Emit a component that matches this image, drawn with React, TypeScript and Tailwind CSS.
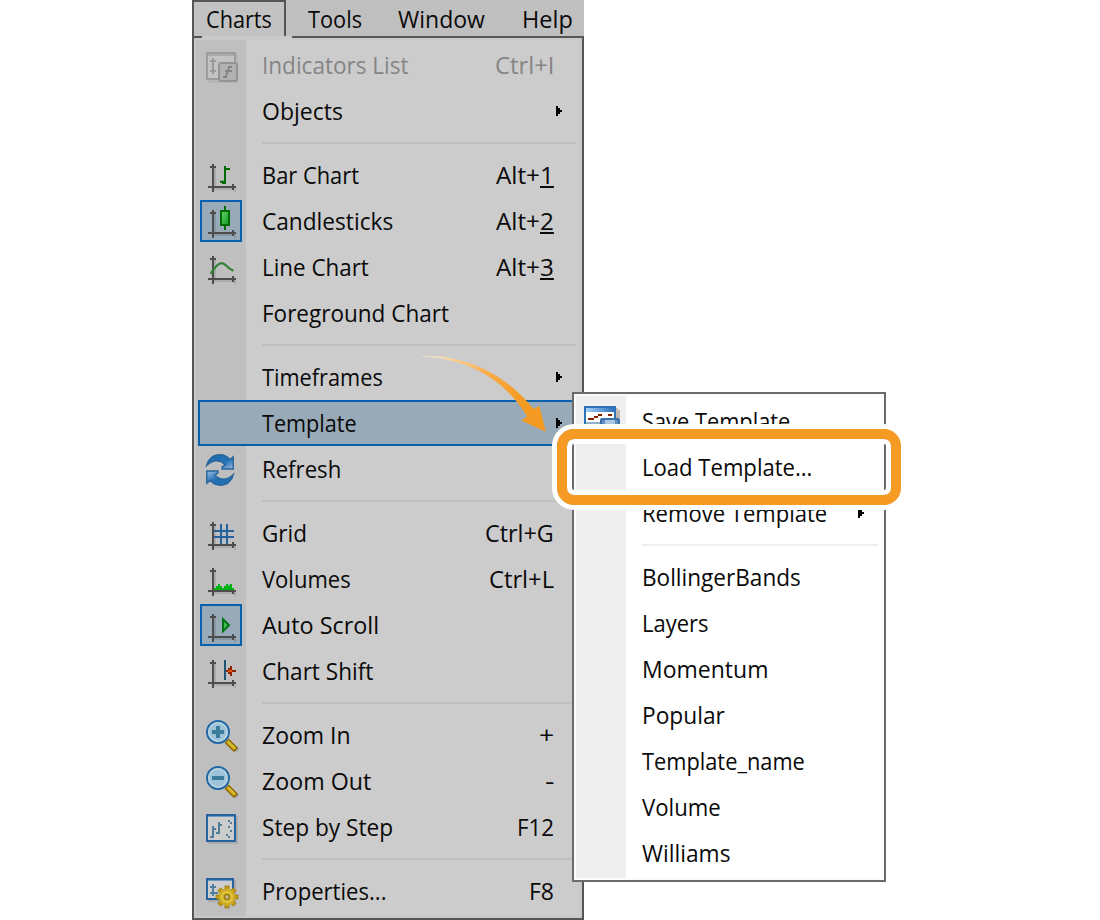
import { useLayoutEffect, useRef, useState, type ReactNode } from "react";

type FitProps = { width: number; right?: boolean; children: ReactNode };

/* Condenses a label horizontally so that it takes exactly the given width. */
function Fit({ width, right, children }: FitProps) {
  const ref = useRef<HTMLSpanElement>(null);
  const [scale, setScale] = useState(1);
  useLayoutEffect(() => {
    if (ref.current) setScale(width / ref.current.offsetWidth);
  }, [width]);
  return (
    <span
      className={right ? "flex justify-end" : "flex justify-start"}
      style={{ width }}
    >
      <span
        ref={ref}
        className={
          right
            ? "shrink-0 origin-right whitespace-pre"
            : "shrink-0 origin-left whitespace-pre"
        }
        style={{ transform: `scaleX(${scale})` }}
      >
        {children}
      </span>
    </span>
  );
}

function Icon({ children }: { children: ReactNode }) {
  return (
    <svg viewBox="0 0 16 16" className="block h-8 w-8 shrink-0 overflow-visible">
      {children}
    </svg>
  );
}

function Axes() {
  return (
    <>
      <g fill="#000" opacity="0.1">
        <path d="M4 4h1v9H4zM3 14h12v1H3zM14 15h1v1h-1z" />
      </g>
      <path
        fill="#4d4d4d"
        d="M3 2h1v14H3zM1 13h14v1H1zM2 3h3v1H2zM13 12h1v3h-1z"
      />
    </>
  );
}

const indicatorsIcon = (
  <Icon>
    <rect x="1" y="2" width="15" height="14.5" fill="#b6b6b6" />
    <rect x="0.5" y="1.5" width="14" height="13" fill="#c3c3c3" stroke="#9d9d9d" />
    <path d="M1 2h13v1H1z" fill="#aaa" />
    <path d="M3.5 4v8M2 5.5h3M2 10.5h3" stroke="#999" fill="none" />
    <rect x="6.5" y="6.5" width="9" height="9" rx="1" fill="#b2b2b2" stroke="#949494" />
    <path d="M13 8.5h-1.5l-1.5 5H8.5M9.5 10.5h3.5" stroke="#858585" fill="none" />
  </Icon>
);

const barIcon = (
  <Icon>
    <Axes />
    <path fill="#006b00" d="M9 3h1v9H9zM10 4h2v1h-2zM7 10.4h2v1H7zM8 11h1v1H8z" />
  </Icon>
);

const candleIcon = (
  <Icon>
    <defs>
      <linearGradient id="candle" x1="0" x2="1" y1="0" y2="1">
        <stop offset="0" stopColor="#6bd16b" />
        <stop offset="1" stopColor="#0b9b1d" />
      </linearGradient>
    </defs>
    <Axes />
    <path fill="#006b00" d="M9 0h1v12H9z" />
    <rect x="7.5" y="2.5" width="4" height="7" fill="url(#candle)" stroke="#006b00" />
  </Icon>
);

const lineIcon = (
  <Icon>
    <Axes />
    <path
      d="M2.3 10.9C4 8.2 5.6 5.9 7.7 5.6C9.8 5.4 11 8.6 13.7 9.3"
      fill="none"
      stroke="#348234"
      strokeWidth="1.1"
    />
  </Icon>
);

const refreshIcon = (
  <Icon>
    <defs>
      <linearGradient id="arcTop" x1="0" x2="1" y1="0" y2="1">
        <stop offset="0" stopColor="#1c6aa9" />
        <stop offset="0.6" stopColor="#2572b8" />
        <stop offset="1" stopColor="#a0bedd" />
      </linearGradient>
      <linearGradient id="arcBottom" x1="1" x2="0" y1="1" y2="0">
        <stop offset="0" stopColor="#1c6aa9" />
        <stop offset="0.55" stopColor="#2572b8" />
        <stop offset="1" stopColor="#a0bedd" />
      </linearGradient>
    </defs>
    <path
      d="M0.3 5.8C1 2.6 3.6.4 6.8.4C9 .4 10.7 1.3 12 2.8L13.6 1.4V7.5H8V6.6L9.6 5.2C6.5 2.6 3 3.2.3 5.8Z"
      fill="url(#arcTop)"
      stroke="#27649b"
      strokeWidth="0.7"
    />
    <path
      d="M13.7 10.2C13 13.4 10.4 15.6 7.2 15.6C5 15.6 3.3 14.7 2 13.2L.4 14.6V8.5H6V9.4L4.4 10.8C7.5 13.4 11 12.8 13.7 10.2Z"
      fill="url(#arcBottom)"
      stroke="#27649b"
      strokeWidth="0.7"
    />
  </Icon>
);

const gridIcon = (
  <Icon>
    <Axes />
    <path fill="#24639f" d="M7 3h1v10H7zM10 3h1v10h-1zM4 6h10v1H4zM4 9h10v1H4z" />
  </Icon>
);

const volumesIcon = (
  <Icon>
    <Axes />
    <path
      fill="#00b315"
      d="M4 13v-1h1v-1h1v-1h1v1h1v1h1v-1h1v-1h1v.6h1V10h1v2h1v1z"
    />
  </Icon>
);

const autoScrollIcon = (
  <Icon>
    <Axes />
    <path d="M8.5 4.6v6l3-3z" fill="#45b958" stroke="#007315" />
  </Icon>
);

const shiftIcon = (
  <Icon>
    <Axes />
    <path fill="#1d5473" d="M9 2h1v10H9z" />
    <path fill="#8e2300" d="M10 7h1V6h1V5h1v2h2v1h-2v2h-1V9h-1V8h-1z" />
    <path fill="#e25510" d="M11 7h2v1h-2z" />
  </Icon>
);

function Magnifier({ plus }: { plus?: boolean }) {
  return (
    <Icon>
      <path d="M11 12.3l4 4 1.5-1.4-1-1.6" fill="#000" opacity="0.12" />
      <path d="M10.3 10.3l4.7 4.7" stroke="#8a6400" strokeWidth="3" />
      <path d="M10.7 10.7l3.8 3.8" stroke="#cfae1e" strokeWidth="1.6" />
      <path d="M11.2 10.7l3.4 3.4" stroke="#e6d35a" strokeWidth="0.5" />
      <circle cx="6" cy="6" r="5.5" fill="#9cc3d8" stroke="#1f66a4" strokeWidth="0.95" />
      <circle cx="6" cy="6" r="4.6" fill="none" stroke="#b9d4e0" strokeWidth="0.8" />
      <path
        d={plus ? "M5 3h2v2h2v2H7v2H5V7H3V5h2z" : "M3 5h6v2H3z"}
        fill="#3a7c9c"
      />
    </Icon>
  );
}

const stepIcon = (
  <Icon>
    <rect x="1" y="2" width="15" height="14" fill="#000" opacity="0.1" />
    <rect x="0.5" y="1.5" width="14" height="13" fill="#cdcdcd" stroke="#24639f" />
    <path d="M1 2h13v.5H1z" fill="#6c98c2" />
    <path
      fill="#4d7f9a"
      d="M3 7h1v5H3zM4 8h1v1H4zM2 12h2v1H2zM6 5h1v6H6zM7 6h1v1H7zM5 10h1v1H5z M11 4h1v1h-1zM12 5h1v1h-1zM11 7h1v1h-1zM12 9h1v1h-1zM10 11h1v1h-1zM11 12h1v1h-1z"
    />
  </Icon>
);

const teeth = [0, 45, 90, 135, 180, 225, 270, 315];

const propertiesIcon = (
  <Icon>
    <rect x="1" y="2" width="14" height="11" fill="#000" opacity="0.1" />
    <rect x="0.5" y="1.5" width="13" height="10" fill="#cdcdcd" stroke="#24639f" />
    <path d="M1 2h12v.5H1z" fill="#6c98c2" />
    <path fill="#4d7f9a" d="M3 4h1v6H3zM2 5h3v1H2zM2 8h3v1H2zM5 8h1v1H5z" />
    <g fill="#c39b16" stroke="#94720a" strokeWidth="0.35">
      {teeth.map((a) => (
        <rect
          key={a}
          x="9.5"
          y="5"
          width="2"
          height="3"
          transform={`rotate(${a} 10.5 10.5)`}
        />
      ))}
    </g>
    <circle cx="10.5" cy="10.5" r="4.2" fill="#cdac22" />
    <circle cx="10.5" cy="10.5" r="2.6" fill="none" stroke="#e0c745" strokeWidth="0.9" />
    <circle cx="10.5" cy="10.5" r="1.2" fill="#c4bd9c" stroke="#997710" strokeWidth="0.7" />
  </Icon>
);

const saveIcon = (
  <Icon>
    <defs>
      <linearGradient id="titleBar" x1="0" x2="1" y1="0" y2="0">
        <stop offset="0" stopColor="#a8d0fa" />
        <stop offset="1" stopColor="#2b73b9" />
      </linearGradient>
    </defs>
    <path d="M16 2h1v1h1v4h-2z" fill="#bdb8b0" />
    <rect x="0.5" y="1.5" width="15" height="13" fill="#fff" stroke="#2b73b9" />
    <path d="M1 2h14v2H1z" fill="url(#titleBar)" />
    <path fill="#872100" d="M2 7h3v1H2zM5 6h2v1H5zM7 5h2v1H7zM12 5h2v1h-2z" />
    <path d="M1 9h7v1H1z" fill="#8fb0c8" />
    <rect x="8.5" y="7.5" width="9" height="8" rx="0.5" fill="#5f8fc2" stroke="#3a6ea8" />
    <path d="M10.5 8h5v2.5h-5z" fill="#aac8e4" />
  </Icon>
);

type Item = {
  label: string;
  w: number;
  icon?: ReactNode;
  checked?: boolean;
  keys?: string;
  access?: string;
  kw?: number;
  sub?: boolean;
  active?: boolean;
  disabled?: boolean;
};

const mainGroups: Item[][] = [
  [
    { label: "Indicators List", w: 147, icon: indicatorsIcon, keys: "Ctrl+I", kw: 59, disabled: true },
    { label: "Objects", w: 81, sub: true },
  ],
  [
    { label: "Bar Chart", w: 97, icon: barIcon, keys: "Alt+", access: "1", kw: 58 },
    { label: "Candlesticks", w: 131, icon: candleIcon, checked: true, keys: "Alt+", access: "2", kw: 58 },
    { label: "Line Chart", w: 107, icon: lineIcon, keys: "Alt+", access: "3", kw: 58 },
    { label: "Foreground Chart", w: 187 },
  ],
  [
    { label: "Timeframes", w: 121, sub: true },
    { label: "Template", w: 95, sub: true, active: true },
    { label: "Refresh", w: 79, icon: refreshIcon },
  ],
  [
    { label: "Grid", w: 45, icon: gridIcon, keys: "Ctrl+G", kw: 69 },
    { label: "Volumes", w: 89, icon: volumesIcon, keys: "Ctrl+L", kw: 65 },
    { label: "Auto Scroll", w: 117, icon: autoScrollIcon, checked: true },
    { label: "Chart Shift", w: 111, icon: shiftIcon },
  ],
  [
    { label: "Zoom In", w: 89, icon: <Magnifier plus />, keys: "+", kw: 15 },
    { label: "Zoom Out", w: 109, icon: <Magnifier />, keys: "-", kw: 9 },
    { label: "Step by Step", w: 131, icon: stepIcon, keys: "F12", kw: 37 },
  ],
  [{ label: "Properties...", w: 124, icon: propertiesIcon, keys: "F8", kw: 25 }],
];

const templateGroups: Item[][] = [
  [
    { label: "Save Template...", w: 166, icon: saveIcon },
    { label: "Load Template...", w: 170 },
    { label: "Remove Template", w: 185, sub: true },
  ],
  [
    { label: "BollingerBands", w: 159 },
    { label: "Layers", w: 67 },
    { label: "Momentum", w: 126 },
    { label: "Popular", w: 83 },
    { label: "Template_name", w: 163 },
    { label: "Volume", w: 79 },
    { label: "Williams", w: 89 },
  ],
];

function SubArrow() {
  return (
    <svg
      viewBox="0 0 3 5"
      className="mr-[14px] h-[10px] w-[6px] shrink-0"
      shapeRendering="crispEdges"
    >
      <path d="M0 0h1v1h1v1h1v1H2v1H1v1H0z" fill="#000" />
    </svg>
  );
}

function Row({ item, light }: { item: Item; light?: boolean }) {
  return (
    <div
      className={
        "flex h-[46px] items-center border-2 " +
        (item.active ? "border-[#0461ad] bg-[#98a9b7] " : "border-transparent ") +
        (item.disabled ? "text-[#858585]" : "text-[#0a0a0a]")
      }
    >
      <div
        className={
          "flex h-[42px] w-[42px] shrink-0 border-2 " +
          (light ? "pt-[2px] pl-[2px] " : "pt-[4px] pl-[4px] ") +
          (item.checked ? "border-[#0461ad] bg-[#98a9b7]" : "border-transparent")
        }
      >
        {item.icon}
      </div>
      <div className="-mt-[1px] ml-[20px] flex-1">
        <Fit width={item.w}>{item.label}</Fit>
      </div>
      {item.keys && (
        <div className="-mt-[1px] mr-[22px]">
          <Fit width={item.kw ?? 0} right>
            {item.keys}
            {item.access && (
              <span className="underline decoration-2 underline-offset-2">{item.access}</span>
            )}
          </Fit>
        </div>
      )}
      {item.sub && <SubArrow />}
    </div>
  );
}

function Menu({ groups, light }: { groups: Item[][]; light?: boolean }) {
  return (
    <div
      className={
        light
          ? "bg-linear-to-r from-[#efefef] from-[50px] to-white to-[50px] p-[2px]"
          : "bg-linear-to-r from-[#bfbfbf] from-[50px] to-[#cccccc] to-[50px] p-[2px]"
      }
    >
      {groups.map((group, g) => (
        <div key={g}>
          {g > 0 && (
            <div className="flex h-[18px] pt-2 pr-[2px] pl-[64px]">
              <div className={light ? "h-[2px] flex-1 bg-[#efefef]" : "h-[2px] flex-1 bg-[#bfbfbf]"} />
            </div>
          )}
          {group.map((item) => (
            <Row key={item.label} item={item} light={light} />
          ))}
        </div>
      ))}
    </div>
  );
}

export default function App() {
  return (
    <div className="relative h-[920px] w-[1100px] overflow-hidden bg-white pl-[192px] font-['Open_Sans','Noto_Sans',sans-serif] text-[23px] leading-[32px] text-[#0a0a0a]">
      <div className="flex h-[36px] w-[392px] bg-[#bfbfbf]">
        <div className="flex h-[36px] w-[94px] border-2 border-b-0 border-[#555555] bg-[#c2c2c2] pt-px pl-[12px]">
          <Fit width={66}>Charts</Fit>
        </div>
        <div className="flex pt-[3px]">
          <div className="ml-[22px] w-[90px]">
            <Fit width={54}>Tools</Fit>
          </div>
          <div className="w-[124px]">
            <Fit width={87}>Window</Fit>
          </div>
          <Fit width={51}>Help</Fit>
        </div>
      </div>

      <div className="w-[392px] bg-[#c9c9c9]">
        <div className="flex h-[2px] justify-between">
          <div className="w-[10px] bg-[#555555]" />
          <div className="w-[292px] bg-[#555555]" />
        </div>
        <div className="h-[882px] border-2 border-t-0 border-[#555555] p-[2px]">
          <Menu groups={mainGroups} />
        </div>
      </div>

      <div className="absolute top-[392px] left-[572px] h-[490px] w-[314px] border-2 border-[#6b6b6b] bg-[#fbfbfb] p-[2px]">
        <Menu groups={templateGroups} light />
      </div>

      <div className="absolute top-[429px] left-[557px] h-[76px] w-[344px] rounded-[17px] border-[10px] border-[#f59b23] shadow-[0_0_0_5px_#fff,inset_0_0_0_5px_#fff]" />

      <svg
        viewBox="415 350 140 90"
        className="absolute top-[350px] left-[415px] h-[90px] w-[140px]"
      >
        <defs>
          <linearGradient id="sweep" gradientUnits="userSpaceOnUse" x1="420" y1="356" x2="520" y2="400">
            <stop offset="0" stopColor="#fff3e2" stopOpacity="0.7" />
            <stop offset="0.3" stopColor="#fbcf93" />
            <stop offset="0.65" stopColor="#f7ab48" />
            <stop offset="1" stopColor="#f59b23" />
          </linearGradient>
        </defs>
        <path
          d="M420 356.2C464 353.5 506 374 533.4 409L539.4 406L545.8 431.8L521.2 420.4L527.3 416.5C503 377 466 358.5 420 356.2Z"
          fill="url(#sweep)"
        />
      </svg>
    </div>
  );
}
